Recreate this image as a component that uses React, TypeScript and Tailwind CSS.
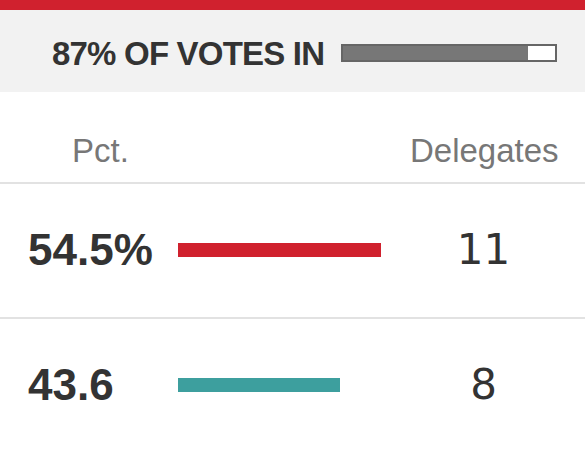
const results = [
  { pct: "54.5%", value: 54.5, delegates: 11, color: "bg-[#d0212e]" },
  { pct: "43.6", value: 43.6, delegates: 8, color: "bg-[#3d9f9e]" },
];

const reporting = 87;

export default function App() {
  return (
    <div className="w-[585px] h-[453px] overflow-hidden bg-white text-[#333] font-['Liberation_Sans',Arial,sans-serif]">
      {/* Top accent + reporting banner */}
      <div className="h-[10px] bg-[#d0212e]" />
      <div className="h-[82px] pt-[4px] bg-[#f2f2f2] flex items-center pl-[52px] gap-[17px]">
        <span className="text-[33px] leading-none font-bold tracking-[-0.8px]">
          {reporting}% OF VOTES IN
        </span>
        <div className="w-[216px] h-[18px] border-2 border-[#666] bg-white">
          <div className="h-full bg-[#777]" style={{ width: `${reporting}%` }} />
        </div>
      </div>

      {/* Column headers */}
      <div className="h-[90px] flex items-end pb-[15px] text-[33px] leading-none text-[#777]">
        <div className="pl-[72px] flex-1">Pct.</div>
        <div className="w-[147px] mr-[28px] text-center">Delegates</div>
      </div>

      {results.map((r) => (
        <div key={r.pct} className="border-t-2 border-[#e2e2e2] h-[135px] pb-[2px] flex items-center">
          <div className="w-[178px] pl-[28px] text-[44px] leading-none font-bold">
            {r.pct}
          </div>
          <div className="flex-1">
            <div className={`h-[14px] ${r.color}`} style={{ width: `${r.value * 3.72}px` }} />
          </div>
          <div className="w-[147px] mr-[28px] text-center text-[42px] leading-none font-['DejaVu_Sans',sans-serif]">
            {r.delegates}
          </div>
        </div>
      ))}
    </div>
  );
}
